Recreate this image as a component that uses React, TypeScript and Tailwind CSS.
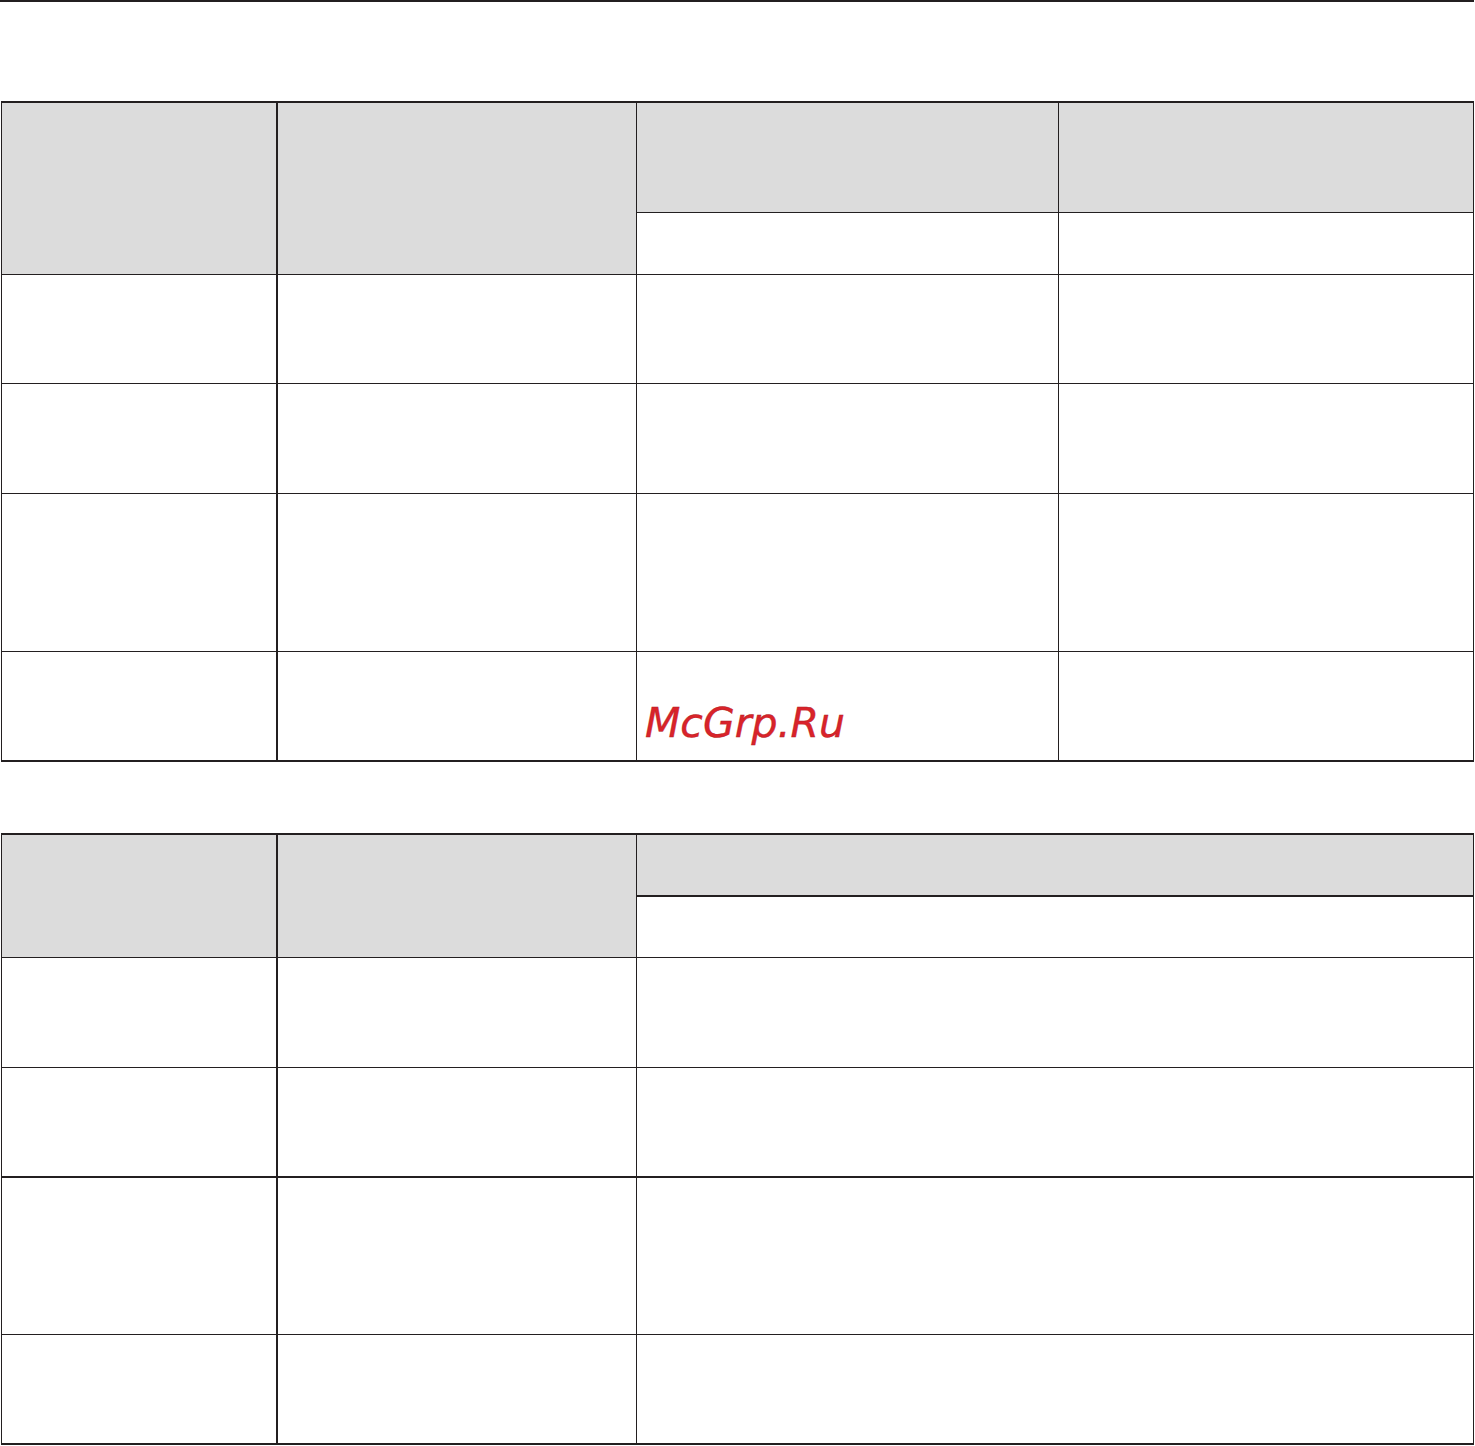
const line = "border-[#231f20]";

function Cell({ className = "" , children }: { className?: string; children?: React.ReactNode }) {
  return <div className={`box-border ${line} ${className}`}>{children}</div>;
}

function TopTable() {
  return (
    <div className={`ml-[1px] mt-[99px] w-[1473px] border-l border-t-2 ${line} grid grid-cols-[276px_359px_422px_415px] grid-rows-[110px_62px_109px_110px_158px_110px]`}>
      <Cell className="row-span-2 bg-[#dcdcdc] border-r-2 border-b" />
      <Cell className="row-span-2 bg-[#dcdcdc] border-r border-b" />
      <Cell className="bg-[#dcdcdc] border-r border-b" />
      <Cell className="bg-[#dcdcdc] border-r border-b" />
      <Cell className="border-r border-b" />
      <Cell className="border-r border-b" />

      <Cell className="border-r-2 border-b" />
      <Cell className="border-r border-b" />
      <Cell className="border-r border-b" />
      <Cell className="border-r border-b" />

      <Cell className="border-r-2 border-b" />
      <Cell className="border-r border-b" />
      <Cell className="border-r border-b" />
      <Cell className="border-r border-b" />

      <Cell className="border-r-2 border-b" />
      <Cell className="border-r border-b" />
      <Cell className="border-r border-b" />
      <Cell className="border-r border-b" />

      <Cell className="border-r-2 border-b-2" />
      <Cell className="border-r border-b-2" />
      <Cell className="border-r border-b-2 pl-[8px] pt-[51px]">
        <span className="block text-[41px] leading-none italic text-[#d9232a] font-['DejaVu_Sans',sans-serif] [-webkit-text-stroke:0.4px_#b01c22]">
          McGrp.Ru
        </span>
      </Cell>
      <Cell className="border-r border-b-2" />
    </div>
  );
}

function BottomTable() {
  return (
    <div className={`ml-[1px] mt-[71px] w-[1473px] border-l border-t-2 ${line} grid grid-cols-[276px_359px_837px] grid-rows-[62px_61px_110px_110px_157px_110px]`}>
      <Cell className="row-span-2 bg-[#dcdcdc] border-r-2 border-b" />
      <Cell className="row-span-2 bg-[#dcdcdc] border-r border-b" />
      <Cell className="bg-[#dcdcdc] border-r border-b-2" />
      <Cell className="border-r border-b" />

      <Cell className="border-r-2 border-b" />
      <Cell className="border-r border-b" />
      <Cell className="border-r border-b" />

      <Cell className="border-r-2 border-b-2" />
      <Cell className="border-r border-b-2" />
      <Cell className="border-r border-b-2" />

      <Cell className="border-r-2 border-b" />
      <Cell className="border-r border-b" />
      <Cell className="border-r border-b" />

      <Cell className="border-r-2 border-b-2" />
      <Cell className="border-r border-b-2" />
      <Cell className="border-r border-b-2" />
    </div>
  );
}

export default function App() {
  return (
    <div className="w-[1475px] h-[1446px] bg-white overflow-hidden">
      <div className="h-[2px] w-[1474px] bg-[#231f20]" />
      <TopTable />
      <BottomTable />
    </div>
  );
}
